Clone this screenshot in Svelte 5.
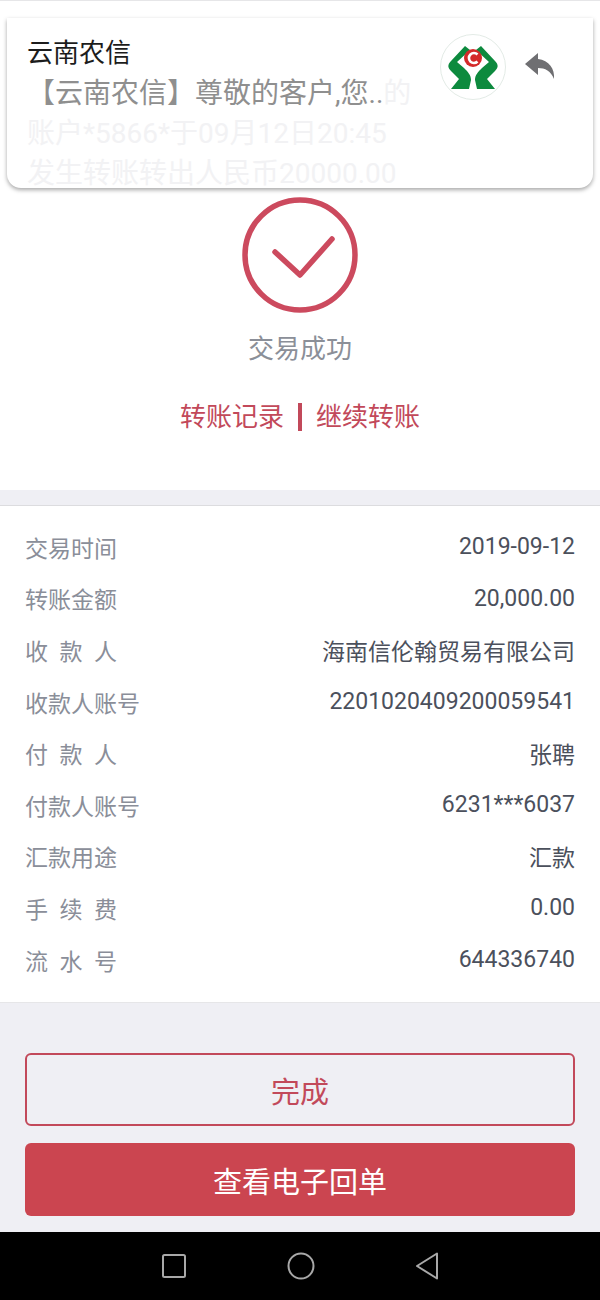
<script>
  const rows = [
    { label: '交易时间', value: '2019-09-12' },
    { label: '转账金额', value: '20,000.00' },
    { label: '收款人', value: '海南信伦翰贸易有限公司', wide: true },
    { label: '收款人账号', value: '2201020409200059541' },
    { label: '付款人', value: '张聘', wide: true },
    { label: '付款人账号', value: '6231***6037' },
    { label: '汇款用途', value: '汇款' },
    { label: '手续费', value: '0.00', wide: true },
    { label: '流水号', value: '644336740', wide: true }
  ];
</script>

<div class="screen">
  <main class="page">
    <section class="result">
      <div class="behind">账户明细 09/12</div>
      <svg class="check" viewBox="0 0 116 116" width="116" height="116" aria-hidden="true">
        <circle cx="58" cy="58" r="55" fill="none" stroke="#cc4a5e" stroke-width="5.5" />
        <path d="M33 55 L58 78 L90 42" fill="none" stroke="#cc4a5e" stroke-width="5.5" stroke-linecap="round" stroke-linejoin="round" />
      </svg>
      <div class="status">交易成功</div>
      <div class="links">
        <span>转账记录</span>
        <i class="sep"></i>
        <span>继续转账</span>
      </div>
    </section>

    <section class="details">
      {#each rows as row}
        <div class="row">
          <span class="label" class:wide={row.wide}>
            {#if row.wide}
              {#each row.label.split('') as ch}<b>{ch}</b>{/each}
            {:else}
              {row.label}
            {/if}
          </span>
          <span class="value">{row.value}</span>
        </div>
      {/each}
    </section>

    <div class="actions">
      <button class="outline" type="button">完成</button>
      <button class="solid" type="button">查看电子回单</button>
    </div>
  </main>

  <nav class="navbar">
    <svg viewBox="0 0 26 26" width="26" height="26" aria-hidden="true">
      <rect x="2" y="2" width="22" height="22" rx="1.5" fill="none" stroke="#a8a8a8" stroke-width="2" />
    </svg>
    <svg viewBox="0 0 28 28" width="28" height="28" aria-hidden="true">
      <circle cx="14" cy="14" r="12.5" fill="none" stroke="#a8a8a8" stroke-width="2" />
    </svg>
    <svg viewBox="0 0 24 28" width="24" height="28" aria-hidden="true">
      <path d="M22 1.5 V26.5 L2 14 Z" fill="none" stroke="#a8a8a8" stroke-width="2" stroke-linejoin="round" />
    </svg>
  </nav>

  <div class="notice">
    <div class="notice-text">
      <div class="app-name">云南农信</div>
      <div class="line first">【云南农信】尊敬的客户,您..<em>的</em></div>
      <div class="line faded">账户*5866*于09月12日20:45</div>
      <div class="line faded">发生转账转出人民币20000.00</div>
    </div>
    <div class="logo">
      <svg viewBox="0 0 66 66" width="66" height="66" aria-hidden="true">
        <circle cx="33" cy="33" r="32.5" fill="#fff" stroke="#e3ebe6" stroke-width="1" />
        <path d="M25 12 L11 27 C7 31 8 34 11 37 L19 45 L11 55 L29 55 L31 46 C31 41 28 38 24 34 L17 28 L30 16 Z" fill="#0d8a3e" />
        <path d="M41 12 L55 27 C59 31 58 34 55 37 L47 45 L55 55 L37 55 L35 46 C35 41 38 38 42 34 L49 28 L36 16 Z" fill="#0d8a3e" />
        <circle cx="33" cy="24" r="9" fill="#d42a2a" />
        <path d="M37.5 20.5 A5 5 0 1 0 37.5 27.5" fill="none" stroke="#fff" stroke-width="2.6" />
      </svg>
    </div>
    <svg class="reply" viewBox="0 0 32 30" width="32" height="30" aria-hidden="true">
      <path d="M14 2 L1 13 L14 24 L14 17 C21 17 27 20 30 28 C31 18 25 9 14 8 Z" fill="#6f6f72" />
    </svg>
  </div>
</div>

<style>
  :global(body) {
    margin: 0;
    background: #efeff4;
  }

  .screen {
    position: relative;
    width: 600px;
    height: 1300px;
    display: flex;
    flex-direction: column;
    overflow: hidden;
    font-family: Roboto, "Noto Sans CJK SC", sans-serif;
  }

  .page {
    flex: 1;
    display: flex;
    flex-direction: column;
    background: #efeff4;
    border-top: 1px solid #e6e6e8;
  }

  .result {
    height: 489px;
    box-sizing: border-box;
    padding-top: 0;
    background: #fff;
    display: flex;
    flex-direction: column;
    align-items: center;
    position: relative;
    margin-bottom: 15px;
  }

  .behind {
    position: absolute;
    left: 30px;
    top: 12px;
    font-size: 22px;
    color: #555;
  }

  .check {
    margin-top: 196px;
  }

  .status {
    margin-top: 17px;
    font-size: 26px;
    line-height: 38px;
    color: #8b8f98;
  }

  .links {
    margin-top: 29px;
    display: flex;
    align-items: center;
    gap: 14px;
    font-size: 26px;
    line-height: 40px;
    color: #c2495a;
  }

  .sep {
    width: 4px;
    height: 28px;
    background: #c2495a;
  }

  .details {
    background: #fff;
    border-top: 1px solid #dcdcdf;
    border-bottom: 1px solid #e6e6e8;
    padding: 15px 25px 17px;
  }

  .row {
    height: 51.6px;
    display: flex;
    justify-content: space-between;
    align-items: center;
    font-size: 23px;
  }

  .label {
    color: #8a8e99;
  }

  .label.wide {
    width: 92px;
    display: flex;
    justify-content: space-between;
  }

  .label b {
    font-weight: 400;
  }

  .value {
    color: #4b505c;
  }

  .actions {
    display: flex;
    flex-direction: column;
    gap: 17px;
    padding: 50px 25px 0;
  }

  button {
    height: 73px;
    border-radius: 6px;
    font-family: inherit;
    font-size: 29px;
    padding: 0;
  }

  .outline {
    background: #efeff4;
    border: 2px solid #c2495a;
    color: #c2495a;
  }

  .solid {
    background: #cb4550;
    border: none;
    color: #fff;
  }

  .navbar {
    height: 68px;
    background: #000;
    display: flex;
    justify-content: center;
    align-items: center;
    gap: 100px;
  }

  .notice {
    position: absolute;
    left: 7px;
    top: 18px;
    width: 586px;
    height: 170px;
    box-sizing: border-box;
    padding: 14px 20px 0;
    background: #fff;
    border-radius: 0 0 14px 14px;
    box-shadow: 0 2px 4px rgba(0, 0, 0, 0.35);
    display: flex;
  }

  .notice-text {
    flex: 1;
  }

  .app-name {
    font-size: 26px;
    line-height: 42px;
    color: #1c1c1c;
  }

  .line {
    font-size: 28px;
    line-height: 40px;
    white-space: nowrap;
  }

  .line.first {
    margin-left: 0;
    color: #8f8f8f;
  }

  .line em {
    font-style: normal;
    color: #f2f2f4;
  }

  .line.faded {
    color: #f2f2f4;
  }

  .logo {
    position: absolute;
    left: 433px;
    top: 16px;
    height: 66px;
  }

  .reply {
    position: absolute;
    left: 517px;
    top: 33px;
  }
</style>
